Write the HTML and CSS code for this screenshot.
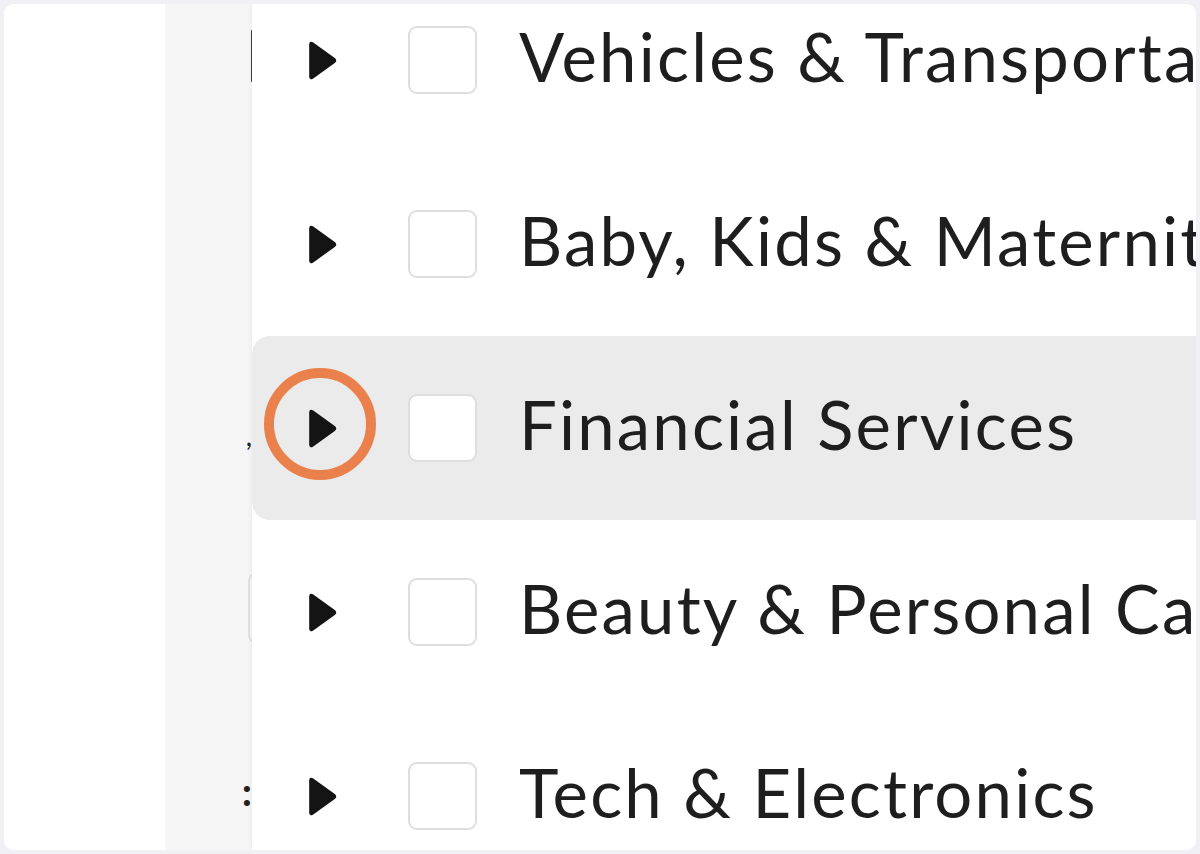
FILE: index.html
```html
<!DOCTYPE html>
<html lang="en">
<head>
<meta charset="utf-8">
<title>Categories</title>
<link rel="stylesheet" href="styles.css">
</head>
<body>
<div class="frame">
  <div class="card">
    <div class="blank"></div>
    <div class="side">
      <div class="side-list">
        <div class="side-row"><span class="bar"></span></div>
        <div class="side-row"></div>
        <div class="side-row"><span class="glyph comma">,</span></div>
        <div class="side-row"><span class="edge"></span></div>
        <div class="side-row"><span class="glyph colon">:</span></div>
      </div>
    </div>
    <div class="panel">
      <ul class="list">
        <li class="row">
          <button class="toggle" aria-label="Expand"><svg viewBox="0 0 30 42" class="tri"><path d="M5 3.5 L26 18.5 Q29 21 26 23.5 L5 38.5 Q1 41 1 36 L1 6 Q1 1 5 3.5 Z"/></svg></button>
          <span class="box"></span>
          <span class="label">Vehicles &amp; Transportation</span>
        </li>
        <li class="row">
          <button class="toggle" aria-label="Expand"><svg viewBox="0 0 30 42" class="tri"><path d="M5 3.5 L26 18.5 Q29 21 26 23.5 L5 38.5 Q1 41 1 36 L1 6 Q1 1 5 3.5 Z"/></svg></button>
          <span class="box"></span>
          <span class="label">Baby, Kids &amp; Maternity</span>
        </li>
        <li class="row active">
          <button class="toggle" aria-label="Expand"><svg viewBox="0 0 30 42" class="tri"><path d="M5 3.5 L26 18.5 Q29 21 26 23.5 L5 38.5 Q1 41 1 36 L1 6 Q1 1 5 3.5 Z"/></svg><span class="ring"></span></button>
          <span class="box"></span>
          <span class="label">Financial Services</span>
        </li>
        <li class="row">
          <button class="toggle" aria-label="Expand"><svg viewBox="0 0 30 42" class="tri"><path d="M5 3.5 L26 18.5 Q29 21 26 23.5 L5 38.5 Q1 41 1 36 L1 6 Q1 1 5 3.5 Z"/></svg></button>
          <span class="box"></span>
          <span class="label">Beauty &amp; Personal Care</span>
        </li>
        <li class="row">
          <button class="toggle" aria-label="Expand"><svg viewBox="0 0 30 42" class="tri"><path d="M5 3.5 L26 18.5 Q29 21 26 23.5 L5 38.5 Q1 41 1 36 L1 6 Q1 1 5 3.5 Z"/></svg></button>
          <span class="box"></span>
          <span class="label">Tech &amp; Electronics</span>
        </li>
      </ul>
    </div>
  </div>
</div>
</body>
</html>
```
FILE: styles.css
```css
* { box-sizing: border-box; }
html, body { margin: 0; padding: 0; }
body {
  background: #f1f0f5;
  font-family: "Lato", "Liberation Sans", sans-serif;
  width: 1200px;
  height: 854px;
  overflow: hidden;
}
.frame {
  padding: 4px;
  height: 854px;
}
.card {
  height: 846px;
  background: #ffffff;
  border-radius: 10px;
  overflow: hidden;
  display: flex;
}
.blank {
  width: 161px;
  flex: none;
  background: #ffffff;
}
.side {
  width: 87px;
  flex: none;
  background: #f6f6f7;
  overflow: hidden;
}
.side-list {
  margin-top: -36px;
}
.side-row {
  height: 184px;
  display: flex;
  align-items: center;
  justify-content: flex-end;
}
.bar {
  width: 3px;
  height: 52px;
  background: #3a3a3a;
  border-radius: 1px;
  margin-right: -2px;
  margin-top: -8px;
}
.glyph {
  color: #222;
  line-height: 1;
  margin-right: 0;
}
.comma { font-size: 28px; margin-top: 14px; }
.colon { font-size: 40px; font-weight: 700; margin-top: -10px; }
.edge {
  width: 8px;
  height: 70px;
  border: 2px solid #e2e2e2;
  border-right: none;
  border-radius: 8px 0 0 8px;
  margin-right: -4px;
  margin-top: -8px;
}
.panel {
  flex: 1;
  background: #ffffff;
  position: relative;
  box-shadow: -2px 0 4px rgba(0, 0, 0, 0.04);
  overflow: hidden;
}
.list {
  list-style: none;
  margin: -36px 0 0 0;
  padding: 0;
}
.row {
  height: 184px;
  display: flex;
  align-items: center;
  padding-left: 56px;
  border-radius: 18px 0 0 18px;
}
.row.active {
  background: #ebebeb;
}
.toggle {
  position: relative;
  width: 31px;
  height: 43px;
  padding: 0;
  border: none;
  background: none;
  flex: none;
  display: flex;
}
.tri {
  width: 31px;
  height: 43px;
  fill: #141414;
}
.ring {
  position: absolute;
  left: 50%;
  top: 50%;
  width: 112px;
  height: 112px;
  margin-left: -60px;
  margin-top: -60px;
  border: 10px solid #ea814c;
  border-radius: 50%;
}
.box {
  width: 69px;
  height: 68px;
  margin-left: 69px;
  flex: none;
  background: #ffffff;
  border: 2px solid #dedede;
  border-radius: 9px;
}
.label {
  margin-left: 42px;
  margin-bottom: 8px;
  font-size: 67px;
  letter-spacing: 2.2px;
  color: #1e1e1e;
  white-space: nowrap;
  line-height: 1;
}
```
